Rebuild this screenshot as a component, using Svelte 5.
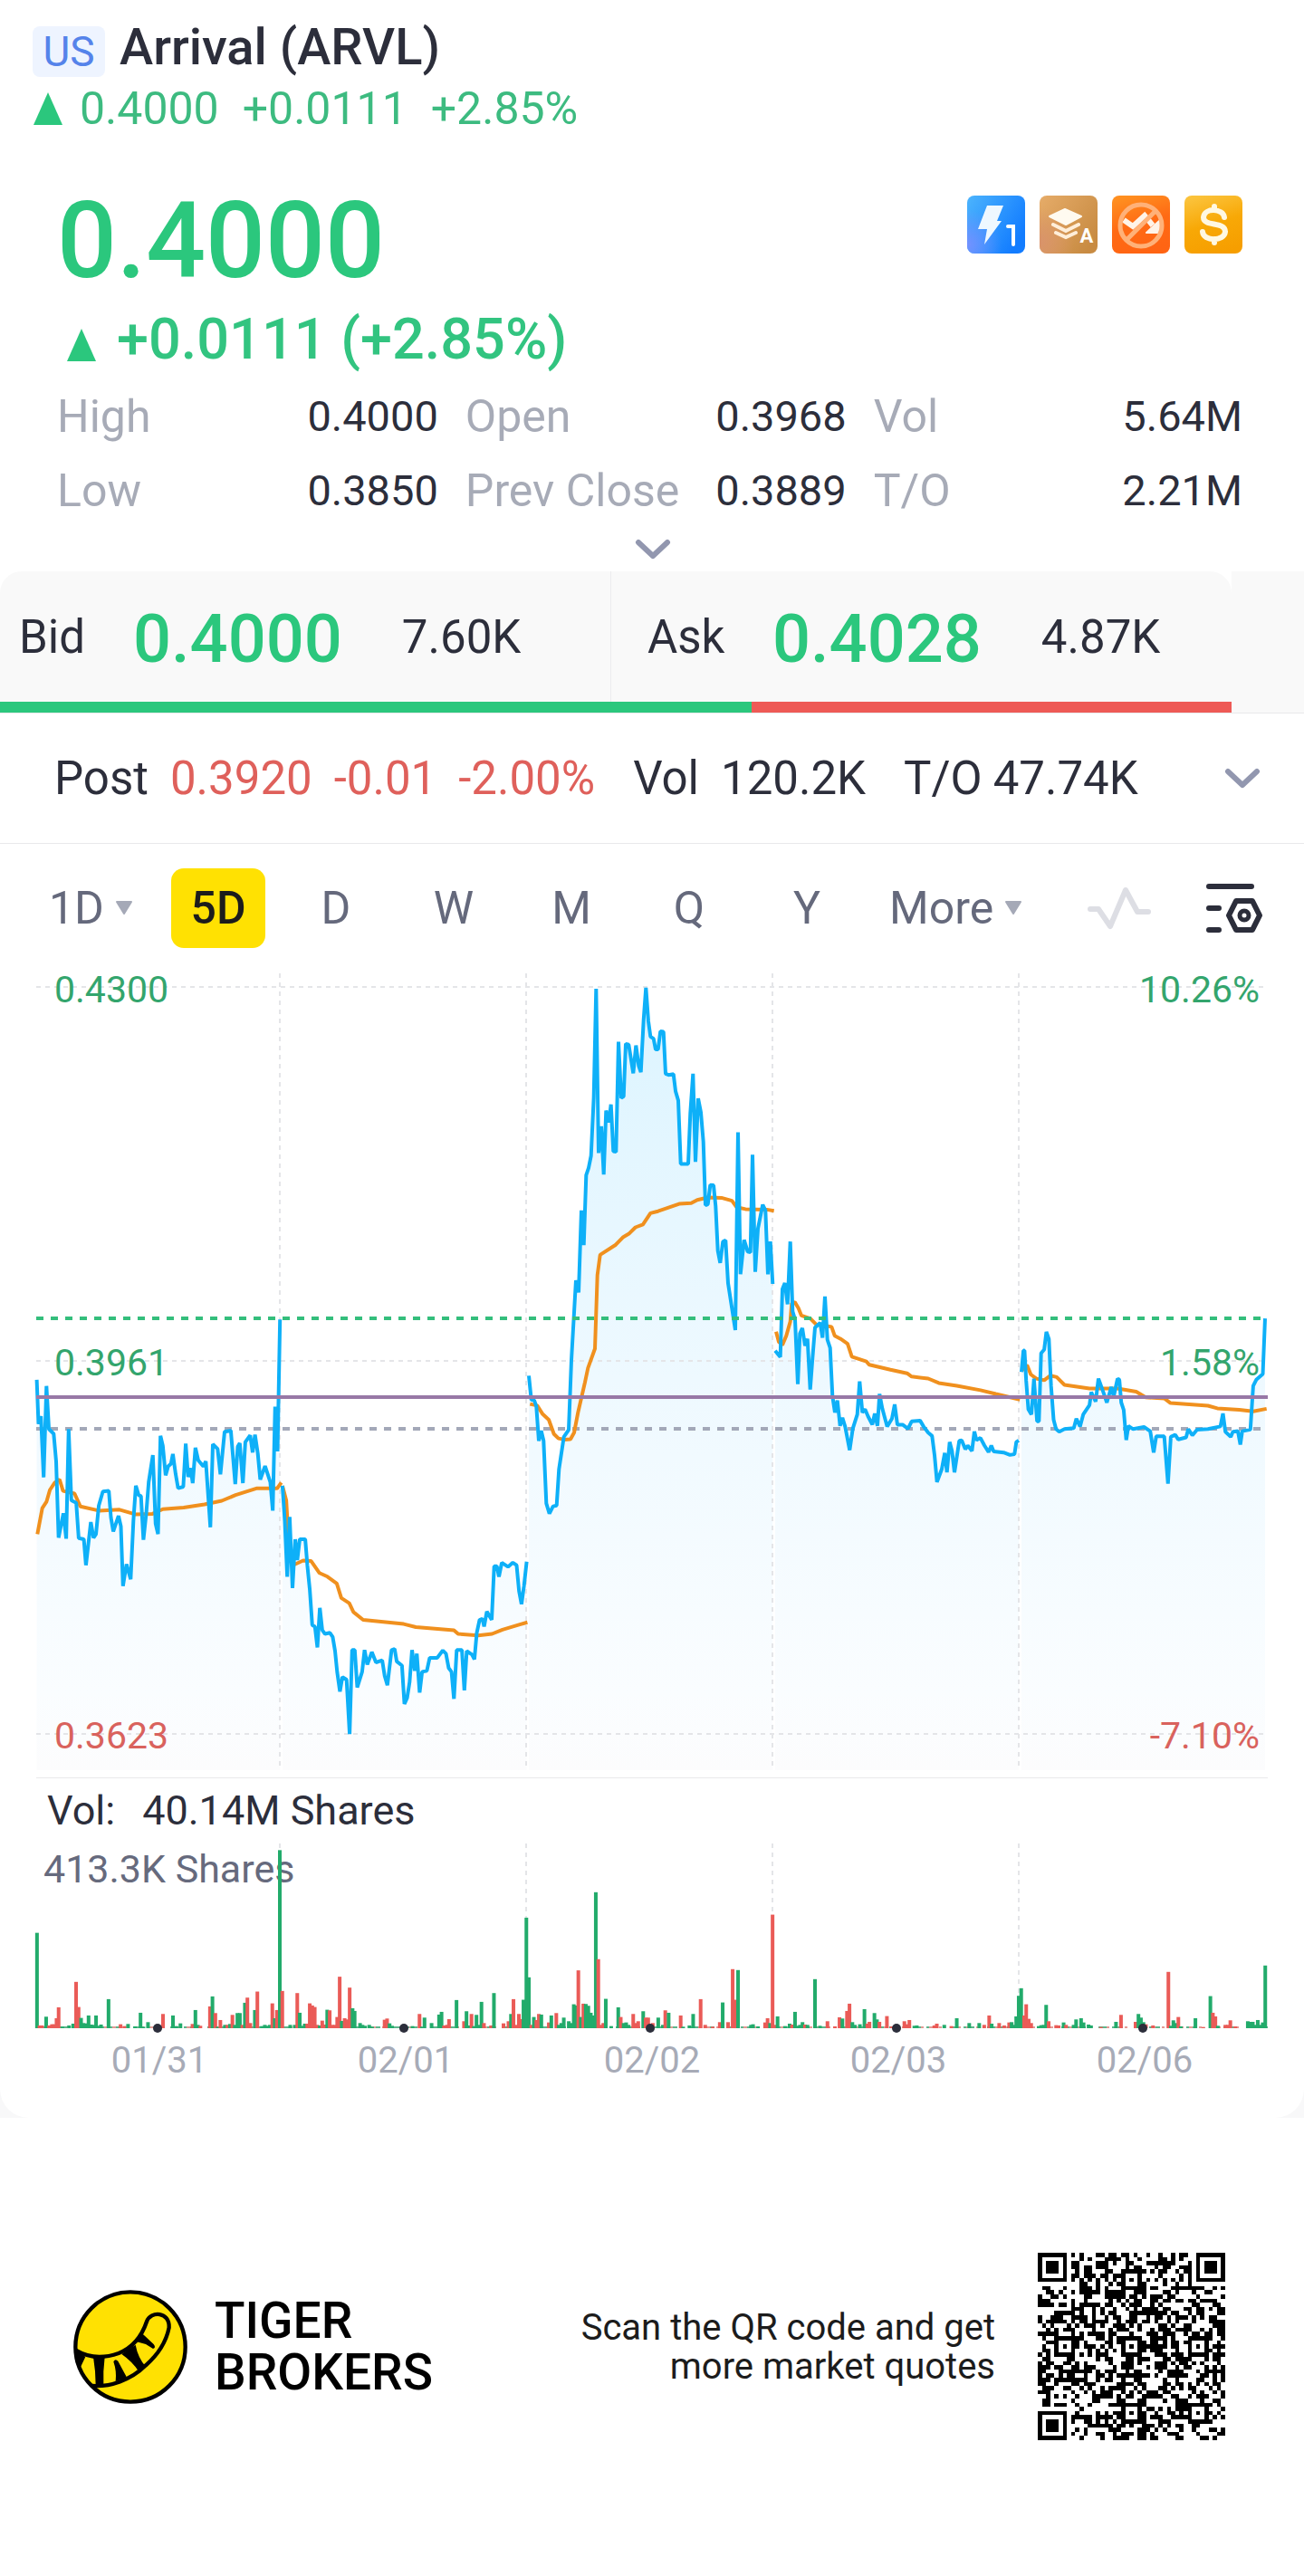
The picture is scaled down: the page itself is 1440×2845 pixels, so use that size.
<script>
  const stats = [
    { label: "High", value: "0.4000" },
    { label: "Open", value: "0.3968" },
    { label: "Vol", value: "5.64M" },
    { label: "Low", value: "0.3850" },
    { label: "Prev Close", value: "0.3889" },
    { label: "T/O", value: "2.21M" },
  ];

  const book = [
    { side: "Bid", price: "0.4000", size: "7.60K" },
    { side: "Ask", price: "0.4028", size: "4.87K" },
  ];

  const tabs = ["1D", "5D", "D", "W", "M", "Q", "Y"];
  let activeTab = "5D";

  const dates = ["01/31", "02/01", "02/02", "02/03", "02/06"];
  const dayLines = [269, 541, 813, 1085];

  // every session keeps its own origin and units, "x,y x,y ..."
  const left = { sx: 2.6133, sy: 1.7422, dx: -40 };
  const middle = { sx: 3, sy: 2.24, dx: 520 };
  const right = { sx: 2.9037, sy: 1.7422, dx: 860 };

  const sessions = [
    {
      scale: left,
      price:
        "106,808 111,893 118,878 126,996 134,820 141,903 155,912 162,965 169,1112 183,1065 191,1114 198,903 206,1040 220,1045 227,1113 242,1115 248,1165 262,1082 270,1112 277,1105 285,1050 297,1023 314,1022 320,1073 327,1100 342,1070 349,1090 355,1205 365,1163 377,1192 385,1080 392,1012 400,1030 407,1032 414,1116 422,1065 429,1005 441,953 449,1085 456,1105 463,916 470,935 478,992 485,975 493,970 499,951 507,990 514,1017 529,1014 536,931 543,995 550,978 556,1007 564,939 572,963 587,975 594,965 607,1092 614,932 628,941 636,990 648,908 666,906 679,1009 686,937 692,930 701,1007 708,928 722,915 729,948 736,914 744,950 751,1000 765,974 780,1005 787,1060 794,860 801,946 808,692",
      average:
        "108,1105 122,1055 134,1043 144,1020 158,1006 172,1000 182,1022 215,1027 232,1052 285,1060 345,1058 390,1067 440,1066 470,1057 530,1054 590,1048 640,1041 680,1030 742,1017 800,1017 812,1006",
    },
    {
      scale: left,
      price:
        "815,1012 822,1080 829,1187 836,1072 844,1209 852,1115 858,1155 865,1115 881,1115 887,1165 894,1212 901,1280 909,1283 916,1323 923,1247 930,1290 938,1297 952,1295 960,1303 967,1330 973,1370 981,1408 988,1380 1000,1385 1009,1490 1016,1328 1024,1328 1031,1400 1045,1370 1052,1328 1060,1356 1073,1332 1085,1352 1103,1348 1110,1378 1118,1396 1130,1328 1139,1326 1145,1350 1160,1358 1167,1432 1175,1420 1182,1390 1189,1328 1197,1368 1203,1335 1211,1410 1218,1370 1232,1368 1240,1343 1262,1343 1278,1329 1287,1335 1295,1363 1303,1370 1310,1422 1318,1328 1333,1328 1340,1406 1347,1330 1362,1337 1369,1346 1376,1295 1384,1270 1392,1268 1397,1283 1405,1254 1419,1270 1426,1167 1434,1167 1440,1187 1448,1160 1466,1168 1480,1160 1491,1165 1498,1215 1505,1240 1512,1205 1520,1158",
      average:
        "815,1012 826,1040 832,1110 845,1165 875,1156 898,1157 922,1180 945,1187 972,1200 985,1228 1008,1238 1020,1255 1048,1270 1165,1278 1200,1284 1310,1290 1322,1297 1380,1300 1420,1297 1450,1289 1500,1279 1522,1275",
    },
    {
      scale: middle,
      price:
        "72,1029 80,1088 90,1090 97,1105 105,1190 113,1165 121,1190 130,1345 140,1370 152,1352 164,1350 172,1260 180,1220 188,1180 204,1163 213,990 228,793 237,823 246,620 254,706 262,533 270,515 278,485 287,340 295,72 303,478 312,412 320,531 328,373 337,402 344,358 352,474 361,475 369,203 378,342 386,338 393,208 403,210 418,281 427,212 436,262 443,278 452,150 460,69 468,152 475,190 485,195 492,222 500,222 508,177 518,178 525,282 535,285 551,283 558,325 567,348 575,505 600,505 607,380 616,282 624,500 633,343 642,378 650,450 657,607 665,605 673,557 684,558 691,610 698,720 706,750 715,697 724,694 732,800 756,916 765,427 773,778 785,693 797,722 806,724 813,482 822,772 831,665 847,606 856,620 864,778 872,697 880,802",
      average:
        "76,1099 100,1103 118,1124 138,1138 155,1173 170,1184 190,1187 210,1186 222,1170 235,1120 258,1045 268,1010 291,962 299,780 308,730 360,705 385,686 405,677 425,662 450,655 475,627 500,622 570,604 610,602 630,594 665,588 710,589 745,596 760,612 790,617 860,618 884,621",
    },
    {
      scale: middle,
      price:
        "888,967 905,983 912,815 920,800 929,852 938,697 946,870 954,890 963,1050 970,925 978,911 987,955 995,938 1004,1063 1012,985 1020,910 1037,898 1045,935 1053,833 1061,940 1070,960 1078,1080 1086,1120 1094,1090 1103,1153 1111,1133 1120,1155 1135,1213 1145,1160 1160,1125 1168,1043 1177,1120 1186,1112 1196,1130 1210,1150 1218,1123 1227,1153 1234,1074 1243,1110 1259,1155 1275,1135 1284,1100 1293,1150 1310,1150 1328,1160 1340,1142 1368,1140 1380,1155 1395,1170 1408,1178 1416,1225 1424,1292 1440,1260 1450,1220 1457,1268 1466,1193 1474,1215 1482,1268 1498,1190 1506,1189 1518,1211 1526,1202 1540,1215 1548,1167 1555,1188 1568,1183 1581,1201 1595,1218 1604,1202 1612,1216 1645,1219 1666,1225 1681,1223 1687,1193 1695,1189",
      average:
        "891,920 900,945 912,953 925,930 938,895 943,850 953,847 965,862 975,880 1005,888 1025,903 1050,905 1075,908 1085,930 1105,938 1128,950 1142,982 1190,994 1200,1002 1270,1014 1325,1023 1340,1031 1395,1036 1430,1047 1490,1054 1568,1065 1619,1074 1699,1088",
    },
    {
      scale: right,
      price:
        "662,793 668,752 672,752 677,810 684,865 694,875 702,806 712,888 718,888 725,757 735,750 742,716 750,730 757,820 765,885 773,903 783,908 800,903 830,901 838,883 850,898 860,875 880,857 886,832 900,850 909,806 925,833 936,852 950,822 958,840 970,806 976,808 982,852 990,866 998,924 1005,897 1020,903 1055,899 1075,907 1086,948 1094,917 1120,917 1132,1008 1141,918 1155,914 1165,923 1190,919 1197,903 1210,915 1225,904 1260,903 1300,898 1308,873 1316,908 1333,918 1340,908 1356,907 1364,933 1370,907 1396,904 1405,820 1415,808 1436,797 1443,690",
      average:
        "664,790 680,780 692,798 710,806 735,809 755,800 775,803 800,818 880,825 970,825 1030,831 1060,842 1120,844 1140,853 1260,858 1290,863 1360,866 1405,869 1448,864",
    },
  ];

  function plot(points, { sx, sy, dx }) {
    return points.split(" ").map((pair) => {
      const [x, y] = pair.split(",").map(Number);
      return [(x / sx + dx).toFixed(1), (y / sy - 10).toFixed(1)];
    });
  }

  const lines = sessions.map(({ scale, price, average }) => {
    const pts = plot(price, scale);
    const line = pts.map((p) => p.join(",")).join(" ");
    return {
      line,
      area: `${pts[0][0]},885 ${line} ${pts[pts.length - 1][0]},885`,
      average: plot(average, scale)
        .map((p) => p.join(","))
        .join(" "),
    };
  });

  // g = up, r = down, then position and top of the bar
  const volumeA =
    "g89,582 r95,888 r101,888 g111,859 r118,888 r125,884 r131,884 r136,864 r141,828 g150,892 g166,888 g176,882 r183,744 r189,827 g195,863 g200,880 g207,881 g213,855 g219,885 g225,886 g231,855 g237,889 g243,885 g261,801 r290,884 r300,890 g308,883 g325,891 g338,846 g345,892 g356,877 r380,892 r392,850 g416,855 g424,890 g434,881 r463,883 g470,837 g476,886 r482,889 r505,825 g511,792 r518,847 g524,892 r530,870 g541,886 r547,886 g553,883 r559,853 g565,886 g571,847 g577,847 r583,886 g589,813 r595,796 r602,880 g613,837 r619,776 g630,890 g637,886 g643,889 g649,886 r655,815 g661,864 r666,837 g673,309 r679,774 g698,886 g709,886 r715,781 g721,846 g727,889 g733,882 r739,882 r745,815 r751,822 r757,827 r763,886 g769,888 r775,872 r781,885 g787,836 r793,838 r799,886 r805,886 r811,860 r817,727 g822,873 r829,864 r835,868 r841,763 g848,831 g853,840 g866,880 g872,886 g878,889 g888,886 g895,892 r925,869 r931,865 g937,881 g943,889 r972,892 g992,890 r1009,850 g1015,892 g1021,862 g1038,880 g1056,852 g1062,843 r1068,888 r1075,886 r1080,867 g1098,804 r1116,874 g1122,841 g1128,888 r1134,850 g1140,890 g1146,853 g1152,886 g1158,810 r1164,880 r1181,888 g1188,781 r1211,881 r1223,874 g1229,850 r1235,801 r1241,886 r1248,850 r1253,867 g1259,803 g1266,532 g1272,729 r1278,886 g1284,860 r1290,870 r1296,850 g1302,852 r1320,878 g1326,855 r1338,847 g1344,886 g1350,880 g1356,862 g1368,874 g1374,880 g1380,818 g1386,822 r1391,706 g1397,860 r1403,816 g1409,817 g1415,823 g1421,846 g1427,855 g1433,448 r1439,669 r1445,886 r1451,880 g1457,800 g1470,890 g1487,828 r1493,860 g1500,880 g1506,878 g1512,886 r1523,850 r1529,880 r1535,874 g1547,841 r1553,862 r1559,862";
  const volumeB =
    "r2,880 g15,862 g26,886 r32,838 g40,846 r69,855 g75,892 g90,888 g99,850 r117,801 r128,886 r146,892 r163,877 g170,812 r183,877 r194,702 r200,803 g207,705 g238,886 g243,884 g255,891 r272,878 r278,864 g284,880 r290,522 r296,886 g302,858 g320,890 g331,882 r337,885 g344,843 g350,889 g356,886 g362,877 r368,885 g374,886 g392,735 g404,889 r422,874 r440,891 r451,861 g458,865 r469,840 r475,816 g482,877 g488,886 g500,884 g511,834 r518,882 r523,876 g535,847 g541,868 r547,876 r565,857 r577,891 r607,874 r613,884 r619,870 g631,889 g637,888 r679,888 r685,882 g703,886 r720,890 g733,864 g763,880 g787,880 r799,886 r811,855 g817,882 r835,880 r847,888 r859,878 g865,877 g871,886 g876,858 g882,790 g888,765 r895,855 r900,818 r906,866 r912,880 g930,890 g936,887 g942,886 g948,820 r954,874 r972,887 r978,888 g990,878 r996,886 g1014,886 g1020,868 g1032,864 g1038,878 g1050,885 g1056,888 r1080,893 g1116,876 r1128,853 r1163,876 g1170,850 g1176,862 g1182,877 r1188,884 r1205,888 r1242,711 g1248,889 g1254,871 g1260,880 r1266,860 g1272,891 g1307,864 r1326,893 g1343,791 r1349,846 r1355,858 g1361,889 r1379,886 r1385,886 r1391,871 r1403,891 g1433,874 g1439,876 g1445,876 g1451,886 g1457,870 g1463,886 g1469,878 g1475,690";

  function readBars(text, offset) {
    return text.split(" ").map((item) => {
      const [x, top] = item.slice(1).split(",").map(Number);
      return {
        up: item[0] === "g",
        x: x / 2.178 + offset,
        height: (897 - top) / 2.99,
      };
    });
  }

  const bars = [...readBars(volumeA, -42), ...readBars(volumeB, 678)];

  // 45 x 45 code with finders, timing and alignment marks
  const N = 45;
  function ring(x, y, cx, cy, r) {
    const d = Math.max(Math.abs(x - cx), Math.abs(y - cy));
    return d <= r ? d : -1;
  }
  function qrPath() {
    let seed = 20230206;
    let d = "";
    const marks = [[22, 6], [6, 22], [22, 22], [38, 22], [22, 38], [38, 38]];
    for (let y = 0; y < N; y++) {
      for (let x = 0; x < N; x++) {
        seed = (seed * 1103515245 + 12345) % 2147483648;
        let on = seed / 2147483648 < 0.5;
        if (x === 6 || y === 6) on = (x + y) % 2 === 0;
        for (const [cx, cy] of marks) {
          const r = ring(x, y, cx, cy, 2);
          if (r >= 0) on = r !== 1;
        }
        for (const [cx, cy] of [[3, 3], [N - 4, 3], [3, N - 4]]) {
          const r = ring(x, y, cx, cy, 4);
          if (r >= 0) on = r !== 2 && r !== 4;
        }
        if (on) d += `M${x} ${y}h1v1h-1z`;
      }
    }
    return d;
  }
  const qr = qrPath();
</script>

<main class="page">
  <div class="card">
    <header>
      <h1><span class="market">US</span>Arrival (ARVL)</h1>
      <div class="ticker">
        <svg class="up" viewBox="0 0 34 38"><path d="M17 1 33 37H1z" /></svg>
        <span>0.4000</span>
        <span>+0.0111</span>
        <span>+2.85%</span>
      </div>
    </header>

    <section class="quote">
      <div class="headline">
        <div class="last">0.4000</div>
        <div class="badges">
          <svg viewBox="0 0 64 64">
            <defs>
              <linearGradient id="blue" x1="0" y1="0" x2="1" y2="0.6">
                <stop offset="0" stop-color="#4cb4fd" />
                <stop offset="1" stop-color="#127cff" />
              </linearGradient>
              <radialGradient id="violet" cx="0" cy="0.85" r="0.6">
                <stop offset="0" stop-color="#7391ff" />
                <stop offset="1" stop-color="#7391ff" stop-opacity="0" />
              </radialGradient>
            </defs>
            <rect width="64" height="64" rx="8" fill="url(#blue)" />
            <rect width="64" height="64" rx="8" fill="url(#violet)" />
            <path d="M22 11H40L33 28H38L19 54 22 37H12z" fill="#eef8ff" />
            <path d="M45 34H51V54" fill="none" stroke="#fff" stroke-width="4" stroke-linecap="round" />
          </svg>
          <svg viewBox="0 0 64 64">
            <defs>
              <linearGradient id="tan" x1="0" y1="0" x2="1" y2="0.7">
                <stop offset="0" stop-color="#e6ac69" />
                <stop offset="1" stop-color="#c88b42" />
              </linearGradient>
              <radialGradient id="rose" cx="0" cy="0.8" r="0.6">
                <stop offset="0" stop-color="#d9936b" />
                <stop offset="1" stop-color="#d9936b" stop-opacity="0" />
              </radialGradient>
            </defs>
            <rect width="64" height="64" rx="8" fill="url(#tan)" />
            <rect width="64" height="64" rx="8" fill="url(#rose)" />
            <path d="M11 23 28 15 46 23 29 32z" fill="#fffaf0" stroke="#fffaf0" stroke-width="2" stroke-linejoin="round" />
            <path d="M15 32 29 39 43 32M18 41 29 46 40 41" fill="none" stroke="#ffeed9" stroke-width="4" stroke-linecap="round" />
            <text x="52" y="52" class="glyph">A</text>
          </svg>
          <svg viewBox="0 0 64 64">
            <defs>
              <linearGradient id="orange" x1="0.3" y1="0" x2="0.6" y2="1">
                <stop offset="0" stop-color="#ff8f20" />
                <stop offset="0.5" stop-color="#ff6a14" />
                <stop offset="1" stop-color="#ff6413" />
              </linearGradient>
            </defs>
            <rect width="64" height="64" rx="8" fill="url(#orange)" />
            <path d="M13 27 23 34 36 22 45 33" fill="none" stroke="#fff3e8" stroke-width="6" />
            <path d="M38 41H52V28z" fill="#fff3e8" stroke="#fff3e8" stroke-width="2" stroke-linejoin="round" />
            <circle cx="32" cy="33" r="23" fill="none" stroke="#ffb178" stroke-width="5" />
            <path d="M16 49 48 17" stroke="#ffb178" stroke-width="5" />
          </svg>
          <svg viewBox="0 0 64 64">
            <defs>
              <linearGradient id="gold" x1="0.3" y1="0" x2="0.6" y2="1">
                <stop offset="0" stop-color="#fbc23a" />
                <stop offset="0.5" stop-color="#f8a806" />
                <stop offset="1" stop-color="#f69e00" />
              </linearGradient>
            </defs>
            <rect width="64" height="64" rx="8" fill="url(#gold)" />
            <path d="M44 24C43 14 22 13 21 24 21 35 45 28 45 40 44 51 21 51 20 40M33 12V16M33 48V52" fill="none" stroke="#fff8e2" stroke-width="6" stroke-linecap="round" />
          </svg>
        </div>
      </div>
      <div class="change">
        <svg class="up" viewBox="0 0 34 38"><path d="M17 1 33 37H1z" /></svg>
        +0.0111 (+2.85%)
      </div>
      <dl class="stats">
        {#each stats as stat}
          <div>
            <dt>{stat.label}</dt>
            <dd>{stat.value}</dd>
          </div>
        {/each}
      </dl>
      <button class="expand" aria-label="Show more figures">
        <svg class="chevron" viewBox="0 0 40 24"><path d="M4 4 20 19 36 4" /></svg>
      </button>
    </section>

    <section class="book">
      <div class="sides">
        {#each book as row}
          <div class="side">
            <span class="name">{row.side}</span>
            <strong>{row.price}</strong>
            <span>{row.size}</span>
          </div>
        {/each}
        <div class="ratio"><i></i></div>
      </div>
    </section>

    <section class="post">
      <span>Post</span>
      <span class="down">0.3920</span>
      <span class="down">-0.01</span>
      <span class="down">-2.00%</span>
      <span class="pair"><span>Vol</span><span>120.2K</span></span>
      <span class="pair"><span>T/O</span><span>47.74K</span></span>
      <button aria-label="Show extended hours">
        <svg class="chevron" viewBox="0 0 40 24"><path d="M4 4 20 19 36 4" /></svg>
      </button>
    </section>

    <nav class="tabs">
      {#each tabs as tab}
        <div class="cell">
          <button class:active={tab === activeTab} on:click={() => (activeTab = tab)}>
            {tab}
            {#if tab === "1D"}
              <svg class="caret" viewBox="0 0 20 16"><path d="M2 1H18L10 14z" /></svg>
            {/if}
          </button>
        </div>
      {/each}
      <button class="more">
        More
        <svg class="caret" viewBox="0 0 20 16"><path d="M2 1H18L10 14z" /></svg>
      </button>
      <button class="tool" aria-label="Indicators">
        <svg width="72" height="50" viewBox="0 0 72 50">
          <path d="M4 26H13L26 45 43 5 56 29H68" fill="none" stroke="#dddee4" stroke-width="6" stroke-linecap="round" stroke-linejoin="round" />
        </svg>
      </button>
      <button class="tool" aria-label="Chart settings">
        <svg width="64" height="56" viewBox="0 0 64 56">
          <g fill="none" stroke="#2c2e3b" stroke-width="6" stroke-linecap="round" stroke-linejoin="round">
            <path d="M3 4H50M3 28H14M3 52H14M33 20H51L59 36 51 52H33L25 36z" />
            <circle cx="42" cy="36" r="5" stroke-width="5" />
          </g>
        </svg>
      </button>
    </nav>

    <section class="chart">
      <svg viewBox="0 0 1360 893">
        <defs>
          <linearGradient id="fill" gradientUnits="userSpaceOnUse" x1="0" y1="20" x2="0" y2="885">
            <stop offset="0" stop-color="#dcf4ff" />
            <stop offset="0.5" stop-color="#eef9ff" />
            <stop offset="0.9" stop-color="#fafdff" />
            <stop offset="1" stop-color="#fcfcfd" />
          </linearGradient>
        </defs>
        {#each lines as session}
          <polygon points={session.area} fill="url(#fill)" />
        {/each}
        <g class="grid">
          {#each [20, 433, 845] as y}
            <path d="M0 {y}H1360" />
          {/each}
          {#each dayLines as x}
            <path d="M{x} 5V885" />
          {/each}
        </g>
        <path class="prev" d="M0 508H1360" />
        {#each lines as session}
          <polyline class="average" points={session.average} />
          <polyline class="price" points={session.line} />
        {/each}
        <path class="current" d="M0 386H1360" />
        <path class="cost" d="M0 473H1360" />
        <g class="axis">
          <text x="20" y="37">0.4300</text>
          <text x="20" y="449">0.3961</text>
          <text x="20" y="861" class="low">0.3623</text>
          <g text-anchor="end">
            <text x="1351" y="37">10.26%</text>
            <text x="1351" y="449">1.58%</text>
            <text x="1351" y="861" class="low">-7.10%</text>
          </g>
        </g>
      </svg>
    </section>

    <section class="volume">
      <p><span>Vol:</span><span>40.14M Shares</span></p>
      <svg viewBox="0 0 1360 212">
        <g class="grid">
          {#each dayLines as x}
            <path d="M{x} 0V204" />
          {/each}
        </g>
        <text x="8" y="43">413.3K Shares</text>
        <path d="M0 203H1360" stroke="#e39a95" stroke-width="2" stroke-dasharray="8 5 3 9 12 4" />
        <path d="M6 203H1360" stroke="#5fb58c" stroke-width="2" stroke-dasharray="5 14 9 6 3 4" />
        {#each bars as bar}
          <rect x={bar.x} y={204 - bar.height} width="4" height={bar.height} fill={bar.up ? "#22ab6b" : "#ea5b57"} />
        {/each}
        {#each dates as date, i}
          <circle cx={134 + i * 272} cy="204" r="5" fill="#2c2e3b" />
        {/each}
      </svg>
      <div class="dates">
        {#each dates as date}
          <span>{date}</span>
        {/each}
      </div>
    </section>
  </div>

  <footer>
    <div class="brand">
      <svg viewBox="0 0 378 378">
        <circle cx="189" cy="189" r="182" fill="#ffe102" stroke="#000" stroke-width="13" />
        <path d="M8 200C50 225 100 228 150 210 200 190 228 150 243 105 256 68 320 72 317 125 308 170 280 215 240 250 190 300 120 322 62 318" fill="none" stroke="#000" stroke-width="13" />
        <path d="M4 196 40 222 20 264 8 240zM66 222H104Q98 270 100 316H74Q74 270 66 222zM133 238Q139 226 148 236L178 292 140 303Q144 270 133 238zM160 213 206 182Q214 225 240 254L218 272Q196 238 160 213zM210 172 230 146 266 180Q275 192 264 195L240 180z" />
      </svg>
      <div>TIGER<br />BROKERS</div>
    </div>
    <p>Scan the QR code and get<br />more market quotes</p>
    <svg class="qr" viewBox="0 0 45 45" shape-rendering="crispEdges"><path d={qr} /></svg>
  </footer>
</main>

<style>
  :global(body) {
    margin: 0;
    background: #fff;
  }

  .page {
    background: #f8f8f9;
    font-family: Roboto, "Liberation Sans", sans-serif;
    color: #2c2e3b;
    font-size: 50px;
  }

  .card {
    background: #fff;
    border-radius: 0 0 32px 32px;
    padding-top: 19px;
    overflow: hidden;
  }

  button {
    font: inherit;
    color: inherit;
    background: none;
    border: 0;
    padding: 0;
    cursor: pointer;
  }

  svg {
    display: block;
    flex: none;
  }

  header {
    padding: 0 36px;
  }

  h1 {
    display: flex;
    align-items: center;
    gap: 16px;
    margin: 0;
    font-size: 56px;
    font-weight: 500;
    line-height: 64px;
  }

  .market {
    width: 80px;
    margin-top: 10px;
    border-radius: 8px;
    background: #eef4ff;
    color: #5583ea;
    font-size: 46px;
    font-weight: 400;
    line-height: 56px;
    text-align: center;
  }

  .ticker {
    display: flex;
    align-items: center;
    gap: 26px;
    line-height: 70px;
    color: #3dbb80;
  }

  .up {
    width: 34px;
    height: 38px;
    fill: #2bc77d;
  }

  .ticker .up {
    margin-right: -8px;
  }

  .quote {
    padding: 51px 68px 0 63px;
  }

  .headline {
    display: flex;
    justify-content: space-between;
  }

  .last {
    font-size: 116px;
    font-weight: 500;
    line-height: 120px;
    color: #2bc77d;
  }

  .badges {
    display: flex;
    gap: 16px;
    padding-top: 10px;
  }

  .badges svg {
    width: 64px;
    height: 64px;
  }

  .glyph {
    fill: #fff;
    font-size: 22px;
    font-weight: 700;
    text-anchor: middle;
  }

  .change {
    display: flex;
    align-items: center;
    gap: 22px;
    margin-top: 11px;
    padding-left: 10px;
    font-size: 63px;
    font-weight: 500;
    line-height: 76px;
    color: #32c480;
  }

  .change .up {
    margin-top: 12px;
  }

  .stats {
    display: grid;
    grid-template-columns: 31fr 31fr 30fr;
    column-gap: 30px;
    margin: 6px 0 0;
    line-height: 82px;
  }

  .stats div {
    display: flex;
    justify-content: space-between;
  }

  .stats dt {
    color: #a7abb7;
  }

  .stats dd {
    margin: 0;
    font-size: 47px;
  }

  .expand {
    display: block;
    margin: 0 auto;
    padding: 12px 0 12px 6px;
  }

  .chevron {
    width: 40px;
    height: 24px;
    fill: none;
    stroke: #9297af;
    stroke-width: 6;
    stroke-linecap: round;
    stroke-linejoin: round;
  }

  .book {
    background: linear-gradient(to left, #f9f9f9 80px, #fff 80px);
    border-bottom: 1px solid #e9e9eb;
    padding-right: 80px;
  }

  .sides {
    display: grid;
    grid-template-columns: 674fr 686fr;
    background: #f9f9f9;
    border-radius: 24px 24px 0 0;
  }

  .side {
    display: flex;
    align-items: center;
    height: 144px;
    padding-left: 21px;
    font-size: 51px;
  }

  .side + .side {
    border-left: 1px solid #ececee;
    padding-left: 40px;
  }

  .side .name {
    min-width: 78px;
  }

  .side strong {
    margin: 4px 66px 0 48px;
    font-size: 74px;
    font-weight: 500;
    color: #2bc77d;
  }

  .side + .side .name {
    min-width: 90px;
  }

  .ratio {
    grid-column: 1 / -1;
    height: 12px;
    background: #ee5a56;
  }

  .ratio i {
    display: block;
    width: 61%;
    height: 100%;
    background: #2bc77d;
  }

  .post {
    display: flex;
    align-items: center;
    gap: 24px;
    height: 143px;
    padding: 0 48px 0 60px;
    border-bottom: 1px solid #e9e9eb;
    font-size: 51px;
    white-space: nowrap;
  }

  .post .down {
    color: #df605b;
  }

  .pair {
    display: flex;
    gap: 24px;
    margin-left: 18px;
  }

  .pair + .pair {
    gap: 12px;
  }

  .post button {
    margin-left: auto;
  }

  .tabs {
    display: flex;
    align-items: center;
    padding: 27px 44px 23px 46px;
    color: #65697c;
  }

  .cell {
    flex: 0 0 130px;
    display: flex;
    justify-content: center;
  }

  .cell:first-child {
    justify-content: flex-start;
    box-sizing: border-box;
    padding-left: 8px;
  }

  .tabs button {
    display: flex;
    align-items: center;
    justify-content: center;
    gap: 12px;
    min-width: 88px;
    height: 88px;
    border-radius: 14px;
  }

  .tabs .active {
    width: 104px;
    background: #ffe102;
    color: #1c1c1c;
    font-weight: 500;
  }

  .caret {
    width: 20px;
    height: 16px;
    fill: #a5a9b7;
    stroke: #a5a9b7;
    stroke-width: 2;
    stroke-linejoin: round;
  }

  .tabs .more {
    margin: 0 auto 0 26px;
  }

  .tabs .tool + .tool {
    margin-left: 52px;
    min-width: 64px;
  }

  .chart,
  .volume {
    margin: 0 40px;
  }

  .chart svg,
  .volume svg {
    width: 100%;
    height: auto;
    overflow: visible;
  }

  .grid path {
    stroke: #e4e5e8;
    stroke-width: 2;
    stroke-dasharray: 5 5;
  }

  .price,
  .average {
    fill: none;
    stroke: #0eb0f8;
    stroke-width: 4;
    stroke-linejoin: bevel;
  }

  .average {
    stroke: #f0901e;
  }

  .prev,
  .current {
    stroke: #a3a8b8;
    stroke-width: 4;
    stroke-dasharray: 8 8;
  }

  .current {
    stroke: #34be7c;
  }

  .cost {
    stroke: #9878a6;
    stroke-width: 4;
  }

  .axis {
    font-size: 41px;
    fill: #33a56d;
  }

  .axis .low {
    fill: #d9625d;
  }

  .volume {
    border-top: 1px solid #e9e9eb;
    padding-bottom: 35px;
  }

  .volume p {
    display: flex;
    gap: 30px;
    margin: 0;
    padding-left: 12px;
    font-size: 45px;
    line-height: 72px;
  }

  .volume text {
    font-size: 43px;
    fill: #666a7d;
  }

  .dates {
    display: grid;
    grid-template-columns: repeat(5, 1fr);
    font-size: 40px;
    line-height: 56px;
    text-align: center;
    color: #a7abb7;
  }

  footer {
    display: flex;
    align-items: center;
    padding: 149px 87px 151px 81px;
    background: #fff;
    color: #000;
  }

  .brand {
    display: flex;
    align-items: center;
    gap: 30px;
    font-size: 55px;
    font-weight: 500;
    line-height: 57px;
  }

  .brand svg {
    width: 126px;
    height: 126px;
  }

  footer p {
    margin: 0 47px 0 auto;
    font-size: 40px;
    line-height: 43px;
    text-align: right;
    color: #1c1c1c;
  }

  .qr {
    width: 207px;
    height: 207px;
  }
</style>
